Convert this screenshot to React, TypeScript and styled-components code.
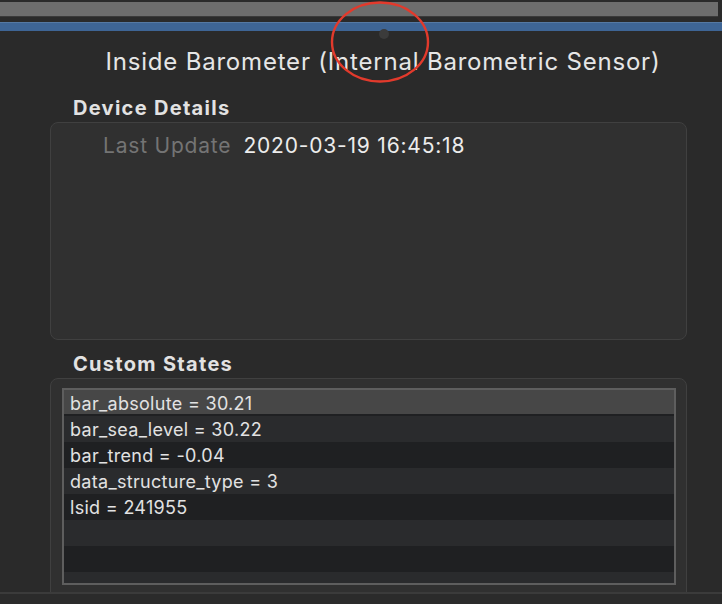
import styled, { createGlobalStyle } from 'styled-components'

const GlobalStyle = createGlobalStyle`
  html, body {
    margin: 0;
    padding: 0;
    background: #2a2a2a;
  }
  body {
    font-family: Inter, "Liberation Sans", Arial, sans-serif;
    -webkit-font-smoothing: antialiased;
  }
`

const Window = styled.div`
  position: relative;
  width: 722px;
  height: 604px;
  overflow: hidden;
  display: flex;
  flex-direction: column;
  background: #2a2a2a;
`

const TitleBar = styled.div`
  height: 14px;
  margin-top: 2px;
  margin-right: 4px;
  background: #6d6d6d;
  border-bottom: 1px solid #3a3a3a;
`

const Splitter = styled.div`
  height: 8px;
  margin-top: 5px;
  background: #3e6595;
  border-top: 1px solid #5579a3;
`

const Main = styled.div`
  flex: 1;
  min-height: 0;
  overflow: hidden;
  display: flex;
  flex-direction: column;
`

const Title = styled.h1`
  margin: 15px 0 0 44px;
  text-align: center;
  font-size: 24px;
  font-weight: 400;
  letter-spacing: 0.8px;
  line-height: 32px;
  color: #e6e6e6;
`

const SectionHeading = styled.h2<{ $top: number }>`
  margin: ${(p) => p.$top}px 0 0 73px;
  font-size: 20px;
  font-weight: 700;
  letter-spacing: 1.3px;
  line-height: 24px;
  color: #e2e2e2;
`

const GroupBox = styled.div<{ $height: number }>`
  margin: 2px 35px 0 50px;
  height: ${(p) => p.$height}px;
  flex-shrink: 0;
  box-sizing: border-box;
  background: #303030;
  border: 1.5px solid #404040;
  border-radius: 8px;
`

const DetailRow = styled.div`
  display: flex;
  align-items: baseline;
  gap: 12px;
  padding: 10px 0 0 52px;
  font-size: 21px;
  letter-spacing: 0.8px;
  line-height: 26px;
`

const DetailLabel = styled.span`
  color: #747474;
`

const DetailValue = styled.span`
  color: #ececec;
`

const ListFrame = styled.div`
  margin: 9px 10px 10px 11px;
  height: 197px;
  box-sizing: border-box;
  border: 2px solid #5e5e5e;
  background: #2a2b2d;
  overflow: hidden;
`

const ListRow = styled.div<{ $odd: boolean; $selected?: boolean }>`
  height: 26px;
  box-sizing: border-box;
  padding: 0 0 0 6px;
  display: flex;
  align-items: center;
  font-size: 18px;
  letter-spacing: 0.3px;
  color: #e2e2e2;
  background: ${(p) => (p.$selected ? '#474747' : p.$odd ? '#2a2b2d' : '#1f2022')};
  box-shadow: ${(p) => (p.$selected ? 'inset 0 -2px 0 #1f2022' : 'none')};
`

const Footer = styled.div`
  height: 10px;
  flex-shrink: 0;
  background: #2b2b2b;
  border-top: 2px solid #3b3b3b;
`

const Annotation = styled.svg`
  position: absolute;
  left: 0;
  top: 0;
  pointer-events: none;
`

const states = [
  'bar_absolute = 30.21',
  'bar_sea_level = 30.22',
  'bar_trend = -0.04',
  'data_structure_type = 3',
  'lsid = 241955',
  '',
  '',
  '',
]

export default function App() {
  return (
    <>
      <GlobalStyle />
      <Window>
        <TitleBar />
        <Splitter />
        <Main>
          <Title>Inside Barometer (Internal Barometric Sensor)</Title>
          <SectionHeading $top={18}>Device Details</SectionHeading>
          <GroupBox $height={218}>
            <DetailRow>
              <DetailLabel>Last Update</DetailLabel>
              <DetailValue>2020-03-19 16:45:18</DetailValue>
            </DetailRow>
          </GroupBox>
          <SectionHeading $top={12}>Custom States</SectionHeading>
          <GroupBox $height={240}>
            <ListFrame>
              {states.map((s, i) => (
                <ListRow key={i} $odd={i % 2 === 1} $selected={i === 0}>
                  {s}
                </ListRow>
              ))}
            </ListFrame>
          </GroupBox>
        </Main>
        <Footer />
        <Annotation width="722" height="604" viewBox="0 0 722 604">
          <circle cx="384" cy="34" r="5" fill="#3b3b3b" />
          <ellipse cx="380" cy="42" rx="48" ry="39.5" fill="none" stroke="#e23a2c" strokeWidth="2.4" />
        </Annotation>
      </Window>
    </>
  )
}
